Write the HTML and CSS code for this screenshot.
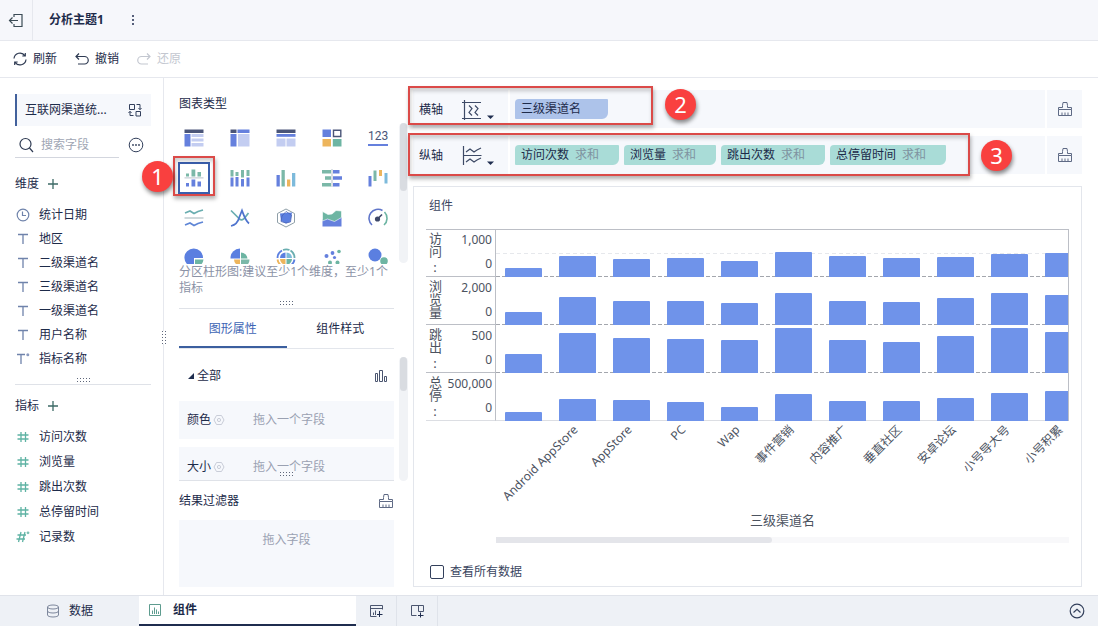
FILE: index.html
```
<!DOCTYPE html>
<html lang="zh-CN">
<head>
<meta charset="utf-8">
<title>分析主题1</title>
<link rel="stylesheet" href="styles.css">
</head>
<body>
<svg class="defs" aria-hidden="true">
  <symbol id="i-text" viewBox="0 0 14 14"><path d="M2 2.5h10M7 2.5V12" fill="none" stroke="#6f83ab" stroke-width="1.3"/></symbol>
  <symbol id="i-text-star" viewBox="0 0 14 14"><path d="M1 2.5h8M5 2.5V12" fill="none" stroke="#6f83ab" stroke-width="1.3"/><circle cx="11.8" cy="2.8" r="1.5" fill="#8a9abf"/></symbol>
  <symbol id="i-num" viewBox="0 0 14 14"><path d="M5 2v10M9.5 2v10M1.5 5h11M1.5 9h11" fill="none" stroke="#5fb3a4" stroke-width="1.3"/></symbol>
  <symbol id="i-num-star" viewBox="0 0 14 14"><path d="M5 2L2.5 12M9 2L6.500 12M1.500 5h8.500M.5 9h8.500" fill="none" stroke="#5fb3a4" stroke-width="1.3"/><circle cx="12" cy="2.800" r="1.400" fill="#7dbfb3"/></symbol>
  <symbol id="i-plus" viewBox="0 0 12 12"><path d="M6 1v10M1 6h10" fill="none" stroke="#3c6a66" stroke-width="1.3"/></symbol>
  <symbol id="i-brush" viewBox="0 0 16 16"><path d="M1.500 8.500V6.500H5.500V4.500L6 1.500H10L10.500 4.500V6.500H14.500V8.500M1.500 8.500H14.500V14.500H1.500zM5 14V11.500M8 14V11.500M11 14V11.500" fill="none" stroke="#5f6a85" stroke-width="1"/></symbol>
  <symbol id="i-gear" viewBox="0 0 12 12"><path d="M3.500 1.500h5L11 6 8.500 10.500h-5L1 6z" fill="none" stroke="#c9cdd8"/><circle cx="6" cy="6" r="1.600" fill="none" stroke="#c9cdd8"/></symbol>
</svg>

<header class="topbar">
  <button class="exit" aria-label="退出"><svg width="16" height="16" viewBox="0 0 16 16"><path d="M6 5V2.500h8v12H6V12M2 8.500h8M4.500 5.500L1.500 8.500l3 3" fill="none" stroke="#3b4b55" stroke-width="1.200"/></svg></button>
  <h1>分析主题1</h1>
  <button class="more" aria-label="更多"><svg width="4" height="12" viewBox="0 0 4 12" fill="#1f2d4f"><circle cx="2" cy="2" r="1"/><circle cx="2" cy="6" r="1"/><circle cx="2" cy="10" r="1"/></svg></button>
</header>

<nav class="toolbar">
  <button><svg width="16" height="16" viewBox="0 0 16 16" fill="none" stroke="#2e3a52" stroke-width="1.200"><path d="M2 7.500A6 6 0 0 1 13 4.800M14 8.500A6 6 0 0 1 3 11.200M13.300 2v3h-3M2.700 14v-3h3"/></svg>刷新</button>
  <button><svg width="16" height="16" viewBox="0 0 16 16" fill="none" stroke="#2e3a52" stroke-width="1.200"><path d="M5 2.500L2 5.500l3 3M2 5.500h8.500a3.700 3.700 0 0 1 0 7.500H4"/></svg>撤销</button>
  <button disabled><svg width="16" height="16" viewBox="0 0 16 16" fill="none" stroke="#c3c7d0" stroke-width="1.200"><path d="M11 2.500l3 3-3 3M14 5.500H5.500a3.700 3.700 0 0 0 0 7.500H12"/></svg>还原</button>
</nav>

<main class="workspace">
  <aside class="fields">
    <div class="dataset"><span>互联网渠道统...</span>
      <button aria-label="切换数据"><svg width="14" height="14" viewBox="0 0 14 14" fill="none" stroke="#33405c"><path d="M1.500 1.500h5v5h-5zM8 8.500h4.500V13H8zM8.500 1.500h3.500v5M10.500 5L12 6.700 13.500 5M5.500 12.500H2v-4M.5 10L2 8.300 3.500 10"/></svg></button>
    </div>
    <div class="search">
      <label><svg width="16" height="16" viewBox="0 0 16 16" fill="none" stroke="#2e3a52" stroke-width="1.200"><circle cx="7.500" cy="7" r="5.500"/><path d="M11.500 11l3.500 4"/></svg><input type="text" placeholder="搜索字段" aria-label="搜索字段"></label>
      <button aria-label="更多选项"><svg width="16" height="16" viewBox="0 0 16 16"><circle cx="8" cy="8" r="6.800" fill="none" stroke="#33405c"/><g fill="#33405c"><circle cx="5" cy="8" r=".9"/><circle cx="8" cy="8" r=".9"/><circle cx="11" cy="8" r=".9"/></g></svg></button>
    </div>
    <section class="group dims">
      <h2>维度<button aria-label="添加维度"><svg width="12" height="12"><use href="#i-plus"/></svg></button></h2>
      <ul>
        <li><svg width="14" height="14" viewBox="0 0 14 14" fill="none" stroke="#6f83ab" stroke-width="1.200"><circle cx="7" cy="7" r="5.800"/><path d="M6.500 3.500v4h3.500"/></svg>统计日期</li>
        <li><svg width="14" height="14"><use href="#i-text"/></svg>地区</li>
        <li><svg width="14" height="14"><use href="#i-text"/></svg>二级渠道名</li>
        <li><svg width="14" height="14"><use href="#i-text"/></svg>三级渠道名</li>
        <li><svg width="14" height="14"><use href="#i-text"/></svg>一级渠道名</li>
        <li><svg width="14" height="14"><use href="#i-text"/></svg>用户名称</li>
        <li><svg width="14" height="14"><use href="#i-text-star"/></svg>指标名称</li>
      </ul>
      <span class="grip"></span>
    </section>
    <section class="group measures">
      <h2>指标<button aria-label="添加指标"><svg width="12" height="12"><use href="#i-plus"/></svg></button></h2>
      <ul>
        <li><svg width="14" height="14"><use href="#i-num"/></svg>访问次数</li>
        <li><svg width="14" height="14"><use href="#i-num"/></svg>浏览量</li>
        <li><svg width="14" height="14"><use href="#i-num"/></svg>跳出次数</li>
        <li><svg width="14" height="14"><use href="#i-num"/></svg>总停留时间</li>
        <li><svg width="14" height="14"><use href="#i-num-star"/></svg>记录数</li>
      </ul>
    </section>
    <span class="grip-v"></span>
  </aside>

  <section class="config">
    <div class="types">
      <h2>图表类型</h2>
      <div class="type-grid">
        <button aria-label="分组表"><svg viewBox="0 0 20 20"><path fill="#4a5578" d="M.5 1.500h19v3.500H.5z"/><path fill="#6580dd" d="M.5 6h6v12.500h-6z"/><path fill="#c3cdf1" d="M7.500 6h12v3h-12zM7.500 10.500h12v3h-12zM7.500 15h12v3.500h-12z"/></svg></button>
        <button aria-label="交叉表"><svg viewBox="0 0 20 20"><path fill="#4a5578" d="M.5 1.500h6V5h-6z"/><path fill="#6580dd" d="M7.500 1.500h12V5h-12zM.5 6h6v12.500h-6z"/><path fill="#c3cdf1" d="M8 6h11.500v12.500H8z"/></svg></button>
        <button aria-label="明细表"><svg viewBox="0 0 20 20"><path fill="#4a5578" d="M.5 1.500h19v3.500H.5z"/><path fill="#6580dd" d="M.5 6h19v2.800H.5z"/><path fill="#c3cdf1" d="M.5 10.500h9v8h-9zM10.500 10.500h9v8h-9z"/></svg></button>
        <button aria-label="颜色表格"><svg viewBox="0 0 20 20"><path fill="#6580dd" d="M.5 1.500h8.500v7.500H.5z"/><path fill="#fff" stroke="#4a5578" stroke-width="1.400" d="M11.500 2.200h7.300v6.300h-7.300z"/><path fill="#edb55c" d="M.5 11h8.500v7.500H.5z"/><path fill="#6db5a3" d="M10.800 11h8.700v7.500h-8.700z"/></svg></button>
        <button class="kpi" aria-label="指标卡">123</button>
        <button class="on" aria-label="分区柱形图"><svg viewBox="0 0 20 20"><path fill="#7bb8a8" d="M2 5.500h3v3H2zM7.500 1.500h3.800v7H7.500zM13.500 4h3.500v4.500h-3.500z"/><path fill="#b9c3cc" d="M.5 9.400h19v1H.5z"/><path fill="#6580dd" d="M2 15h3v3.500H2zM7.500 11.500h3.800v7H7.500zM13.500 13.500h3.500v5h-3.500z"/></svg></button>
        <button aria-label="堆积柱形图"><svg viewBox="0 0 20 20"><path fill="#7bb8a8" d="M.5 2h3v6.500h-3zM5.500 4h3v4h-3zM11 2h3v7.500h-3zM16.500 2h3v6h-3z"/><path fill="#6580dd" d="M.5 9.500h3v9h-3zM5.500 9h3v9.500h-3zM11 11h3v7.500h-3zM16.500 9.500h3v9h-3z"/></svg></button>
        <button aria-label="多系列柱形图"><svg viewBox="0 0 20 20"><path fill="#6580dd" d="M.5 7h3.300v11.500H.5z"/><path fill="#7bb8a8" d="M5.500 2h3.300v16.500H5.500z"/><path fill="#edb55c" d="M11 11.500h3.300v7H11z"/><path fill="#7dbadb" d="M16 5h3.300v13.500H16z"/></svg></button>
        <button aria-label="对比柱状图"><svg viewBox="0 0 20 20"><path fill="#7bb8a8" d="M0 2h9v3.500H0zM3 8.300h6v3.500H3zM0 15h9v3.500H0z"/><path fill="#b9c3cc" d="M9.500 1h1v18h-1z"/><path fill="#6580dd" d="M11 2h6.500v3.500H11zM11 8.300h9v3.500h-9zM11 15h6.500v3.500H11z"/></svg></button>
        <button aria-label="瀑布图"><svg viewBox="0 0 20 20"><path fill="#6580dd" d="M.5 8h3v10.500h-3z"/><path fill="#7bb8a8" d="M5.500 2.500h3v10.500h-3z"/><path fill="#edb55c" d="M11 2h3v6h-3z"/><path fill="#7dbadb" d="M16.500 5h3v10.500h-3z"/></svg></button>
        <button aria-label="分区折线图"><svg viewBox="0 0 20 20" fill="none" stroke-width="1.700"><path stroke="#6aaeb0" d="M1 5l5-2 4 2.500 4-2 5-1.500"/><path stroke="#9fb3b8" stroke-width="1" d="M.5 10h19"/><path stroke="#5f86d6" d="M1 17l5-2 4 2.500 4-2 5-1.500"/></svg></button>
        <button aria-label="多系列折线图"><svg viewBox="0 0 20 20" fill="none" stroke-width="1.700"><path stroke="#6aaeb0" d="M1 2.500L8.500 10c2 3 5 2 6.500-.5L18.500 5"/><path stroke="#4f74ce" d="M1 18c4-1 7-4 8-8l3-7.500c2 5.500 3.500 10 7 13"/></svg></button>
        <button aria-label="雷达图"><svg viewBox="0 0 20 20"><path fill="none" stroke="#8f9fa8" d="M10 1l8.500 4.500v9L10 19l-8.500-4.500v-9z"/><path fill="#5b7fe0" d="M10 5l6-.5-1.500 9-4.500 2-5-2.500L4 5.500z"/><path fill="none" stroke="#4a63b5" stroke-width=".8" d="M10 3.500L6 8l-1 5.500 5 1.500 4.500-1 1-7z"/></svg></button>
        <button aria-label="面积图"><svg viewBox="0 0 20 20"><path fill="#6580dd" d="M.5 11l19-2v9.500H.5z"/><path fill="#6db5a3" stroke="#fff" stroke-width=".6" d="M.5 3.500L6 6.500 10 6l4-3.500 5.500.5v6.500l-7 4L5.500 11l-5 2z"/></svg></button>
        <button aria-label="仪表盘"><svg viewBox="0 0 20 20" fill="none"><path stroke="#5f75c9" stroke-width="1.600" d="M4 17A9 9 0 0 1 14.500 2.500"/><path stroke="#6db5a3" stroke-width="1.600" d="M16.500 4A9 9 0 0 1 16 17"/><circle cx="9.500" cy="11" r="2.600" fill="#3d4768"/><path stroke="#3d4768" stroke-width="1.600" d="M10 10.500l4-4"/></svg></button>
        <button aria-label="饼图"><svg viewBox="0 0 20 20"><path fill="#5b7fe0" d="M10 10h9A9.300 9.300 0 1 0 10 19z"/><path fill="#6db5a3" d="M11 11.500h8.500a9 9 0 0 1-8.500 8z"/></svg></button>
        <button aria-label="玫瑰图"><svg viewBox="0 0 20 20"><path fill="#5b7fe0" d="M10 10.500V.5A9.500 9.500 0 0 0 .5 10.500z"/><path fill="#6db5a3" d="M11 4.500v6h6.500a6.500 6.500 0 0 0-6.500-6z"/><path fill="#edb55c" d="M4 11.500h6v6a6 6 0 0 1-6-6z"/><path fill="#7bb8a8" d="M11 11.500h8.500a8 8 0 0 1-8.500 8z"/></svg></button>
        <button aria-label="多层饼图"><svg viewBox="0 0 20 20"><g fill="none" stroke-width="1.800"><path stroke="#5b7fe0" d="M1.500 10A8.500 8.500 0 0 1 6 2.500"/><path stroke="#6aaeb0" d="M7 2A8.500 8.500 0 0 1 13.500 2M14.500 2.500A8.500 8.500 0 0 1 18.500 10"/><path stroke="#edb55c" d="M1.500 11.500a8.500 8.500 0 0 0 5 6.500"/><path stroke="#5b7fe0" d="M18.500 11.500a8.500 8.500 0 0 1-5 6.500"/></g><path fill="#5b7fe0" d="M9.500 10V4.500A5.500 5.500 0 0 0 4 10z"/><path fill="#7dbadb" d="M10.500 10V4.500A5.500 5.500 0 0 1 16 10z"/><path fill="#edb55c" d="M4 11h5.500v5.500A5.500 5.500 0 0 1 4 11z"/><path fill="#6db5a3" d="M10.500 11H16a5.500 5.500 0 0 1-5.500 5.500z"/></svg></button>
        <button aria-label="散点图"><svg viewBox="0 0 20 20"><g fill="#6580dd"><circle cx="10.500" cy="5" r="1.900"/><circle cx="4.500" cy="8" r="2"/><circle cx="12.500" cy="9.500" r="1.600"/></g><g fill="#6db5a3"><circle cx="17" cy="3.500" r="1.800"/><circle cx="8" cy="14.500" r="2"/><circle cx="15.500" cy="14.500" r="2"/></g></svg></button>
        <button aria-label="聚合气泡图"><svg viewBox="0 0 20 20"><circle cx="7" cy="7" r="6.500" fill="#5b7fe0"/><circle cx="16" cy="13" r="3.800" fill="#6db5a3"/></svg></button>
      </div>
      <p>分区柱形图:建议至少1个维度，至少1个指标</p>
      <span class="grip"></span>
      <span class="track long"><i></i></span>
      <span class="mark mark-1"></span><b class="badge badge-1">1</b>
    </div>
    <div class="tabs"><button class="on">图形属性</button><button>组件样式</button></div>
    <div class="attrs">
      <h3><svg width="6" height="6" viewBox="0 0 6 6"><path d="M6 0v6H0z" fill="#1f2d4f"/></svg>全部<svg class="end" width="14" height="14" viewBox="0 0 14 14" fill="none" stroke="#4a556f"><path d="M1.500 4.500h2v8h-2zM5.500 1.500h3v11h-3zM10.500 7.500h2v5h-2z"/></svg></h3>
      <div class="attr"><span>颜色</span><svg width="12" height="12"><use href="#i-gear"/></svg><em>拖入一个字段</em></div>
      <div class="attr"><span>大小</span><svg width="12" height="12"><use href="#i-gear"/></svg><em>拖入一个字段</em></div>
      <span class="grip"></span>
      <span class="track"><i></i></span>
    </div>
    <div class="filter">
      <h2>结果过滤器<button aria-label="清空过滤器"><svg width="16" height="16"><use href="#i-brush"/></svg></button></h2>
      <div class="drop">拖入字段</div>
    </div>
  </section>

  <section class="canvas">
    <div class="axis">
      <div class="axis-name"><span>横轴</span><button aria-label="横轴设置"><svg width="34" height="24" viewBox="0 0 34 24" fill="none" stroke="#3d4a66" stroke-width="1.200"><path d="M4.500 2v20M2 4.500h19M2 20.500h19M9 7.500l3 3-3 4 3 3M15 7.500l3 3-3 4 3 3"/><path fill="#1f2d4f" stroke="none" d="M27 17.500h7L30.500 21z"/></svg></button></div>
      <div class="pills"><span class="pill dim">三级渠道名</span></div>
      <button class="clear" aria-label="清空横轴"><svg width="16" height="16"><use href="#i-brush"/></svg></button>
      <span class="mark mark-2"></span><b class="badge badge-2">2</b>
    </div>
    <div class="axis">
      <div class="axis-name"><span>纵轴</span><button aria-label="纵轴设置"><svg width="34" height="24" viewBox="0 0 34 24" fill="none" stroke="#3d4a66" stroke-width="1.200"><path d="M3.500 2v19M3.500 11.500h18M6 8l4-3 4 3 3-2 4-2M6 18l4-3 4 3 3-2 4-2"/><path fill="#1f2d4f" stroke="none" d="M27 17.500h7L30.500 21z"/></svg></button></div>
      <div class="pills">
        <span class="pill">访问次数<small>求和</small></span>
        <span class="pill">浏览量<small>求和</small></span>
        <span class="pill">跳出次数<small>求和</small></span>
        <span class="pill">总停留时间<small>求和</small></span>
      </div>
      <button class="clear" aria-label="清空纵轴"><svg width="16" height="16"><use href="#i-brush"/></svg></button>
      <span class="mark mark-3"></span><b class="badge badge-3">3</b>
    </div>

    <article class="card">
      <h2>组件</h2>
      <div class="chart">
        <div class="row first"><div class="name">访问:</div><div class="scale"><span>1,000</span><span>0</span></div>
          <div class="plot"><i style="height:9px"></i><i style="height:21px"></i><i style="height:18px"></i><i style="height:19px"></i><i style="height:16px"></i><i style="height:25px"></i><i style="height:21px"></i><i style="height:19px"></i><i style="height:20px"></i><i style="height:23px"></i><i style="height:24px"></i></div></div>
        <div class="row"><div class="name">浏览量</div><div class="scale"><span>2,000</span><span>0</span></div>
          <div class="plot"><i style="height:13px"></i><i style="height:28px"></i><i style="height:24px"></i><i style="height:24px"></i><i style="height:22px"></i><i style="height:32px"></i><i style="height:24px"></i><i style="height:23px"></i><i style="height:27px"></i><i style="height:32px"></i><i style="height:30px"></i></div></div>
        <div class="row"><div class="name">跳出:</div><div class="scale"><span>500</span><span>0</span></div>
          <div class="plot"><i style="height:19px"></i><i style="height:40px"></i><i style="height:35px"></i><i style="height:34px"></i><i style="height:33px"></i><i style="height:45px"></i><i style="height:33px"></i><i style="height:31px"></i><i style="height:37px"></i><i style="height:45px"></i><i style="height:41px"></i></div></div>
        <div class="row last"><div class="name">总停:</div><div class="scale"><span>500,000</span><span>0</span></div>
          <div class="plot"><i style="height:9px"></i><i style="height:22px"></i><i style="height:21px"></i><i style="height:19px"></i><i style="height:14px"></i><i style="height:27px"></i><i style="height:20px"></i><i style="height:20px"></i><i style="height:23px"></i><i style="height:28px"></i><i style="height:30px"></i></div></div>
        <div class="cats"><div></div><div><span>Android AppStore</span></div><div><span>AppStore</span></div><div><span>PC</span></div><div><span>Wap</span></div><div><span>事件营销</span></div><div><span>内容推广</span></div><div><span>垂直社区</span></div><div><span>安卓论坛</span></div><div><span>小号导大号</span></div><div><span>小号积累</span></div></div>
        <div class="axis-title">三级渠道名</div>
        <div class="hscroll"><i></i></div>
      </div>
      <label class="all"><input type="checkbox">查看所有数据</label>
    </article>
  </section>
</main>

<footer class="bottom">
  <button class="tab data"><svg width="14" height="14" viewBox="0 0 14 14" fill="none" stroke="#7d879c"><ellipse cx="7" cy="3" rx="5.500" ry="2"/><path d="M1.500 3v8c0 1.200 2.500 2 5.500 2s5.500-.8 5.500-2V3M1.500 7c0 1.200 2.500 2 5.500 2s5.500-.8 5.500-2"/></svg>数据</button>
  <button class="tab on"><svg width="14" height="14" viewBox="0 0 14 14" fill="none" stroke="#5e9c8f"><path d="M1.500 1.500h11v11h-11zM4.500 11V7.500M6.500 11V4.500M8.500 11V6.500M10.500 11V8.500"/></svg>组件</button>
  <button class="add" aria-label="添加组件"><svg width="14" height="14" viewBox="0 0 14 14" fill="none" stroke="#4a556f"><path d="M13.500 5.500v-4h-12v11h6M1.500 4.500h12M4.500 11V8.500M6.500 11V6.500"/><path stroke="#1f2d4f" d="M10.500 7v6M8 10.500h5.500"/></svg></button>
  <button class="add" aria-label="添加仪表板"><svg width="14" height="14" viewBox="0 0 14 14" fill="none" stroke="#4a556f"><path d="M13.500 7.500v-6h-12v10h5M8.500 1.500v6h5"/><path stroke="#1f2d4f" d="M10.500 8.500v5M8 11.500h5.500"/></svg></button>
  <button class="up" aria-label="展开"><svg width="16" height="16" viewBox="0 0 16 16" fill="none" stroke="#33405c" stroke-width="1.200"><circle cx="8" cy="8" r="6.800"/><path d="M4.500 9.500L8 6.300l3.500 3.200"/></svg></button>
</footer>
</body>
</html>
```
FILE: styles.css
```
* { box-sizing: border-box; margin: 0; padding: 0; }
body {
  height: 100vh;
  display: flex;
  flex-direction: column;
  overflow: hidden;
  background: #fff;
  color: #1d2b4a;
  font: 12px/16px "Noto Sans", "Noto Sans CJK SC", sans-serif;
}
button { border: 0; background: none; font: inherit; color: inherit; display: flex; align-items: center; justify-content: center; }
h1, h2, h3 { font-size: 12px; font-weight: 400; }
ul { list-style: none; }
svg { flex: none; display: block; }
.defs { position: absolute; width: 0; height: 0; }

.topbar { flex: none; height: 41px; display: flex; align-items: center; background: #f6f7fb; border-bottom: 1px solid #e6e8ee; }
.exit { width: 33px; height: 40px; border-right: 1px solid #e6e8ee; }
.topbar h1 { margin: 0 27px 0 16px; font-weight: 700; }
.toolbar { flex: none; height: 37px; padding: 0 12px; display: flex; align-items: center; gap: 17px; border-bottom: 1px solid #e6e8ee; }
.toolbar button { gap: 5px; }
.toolbar button:disabled { color: #c3c7d0; }

.workspace { flex: 1; min-height: 0; display: grid; grid-template-columns: 164px 244px minmax(0, 1fr); }

.grip { display: block; width: 13px; height: 4px; background: linear-gradient(90deg, #5f677b 1px, transparent 1px) 0 0 / 3px 1px repeat-x, linear-gradient(90deg, #5f677b 1px, transparent 1px) 0 3px / 3px 1px repeat-x; }
.fields { position: relative; padding: 16px 12px 0 15px; border-right: 1px solid #e6e8ee; }
.grip-v { position: absolute; right: -3px; top: 253px; width: 4px; height: 13px; background: linear-gradient(#5f677b 1px, transparent 1px) 0 0 / 1px 3px repeat-y, linear-gradient(#5f677b 1px, transparent 1px) 3px 0 / 1px 3px repeat-y, #fff; }
.dataset { height: 32px; padding: 0 9px 0 8px; display: flex; align-items: center; justify-content: space-between; background: #f6f8fc; border-left: 2px solid #42619c; }
.search { height: 32px; display: flex; justify-content: space-between; }
.search label { width: 104px; height: 32px; padding: 6px 0 0 3px; display: flex; align-items: center; gap: 7px; border-bottom: 1px solid #d3d6de; }
.search input { width: 72px; border: 0; outline: 0; background: none; font: inherit; color: inherit; }
.search input::placeholder { color: #a0a6b4; }
.search button { margin-right: 7px; padding-top: 6px; }
.group h2 { display: flex; align-items: center; gap: 8px; height: 20px; }
.group li { display: flex; align-items: center; gap: 9px; height: 24px; padding-left: 1px; }
.dims { margin-top: 16px; border-bottom: 1px solid #dfe2e8; }
.dims ul { margin-top: 9px; }
.dims .grip { margin: 7px auto 2px; }
.measures { margin-top: 11px; }
.measures ul { margin-top: 8px; }
.measures li { height: 25px; }

.config { padding: 0 14px 8px 15px; display: flex; flex-direction: column; }
.types { position: relative; height: 231px; padding-top: 18px; border-bottom: 1px solid #dfe2e8; }
.type-grid { margin: 6px 0 0 -8px; width: 230px; height: 146px; overflow: hidden; display: grid; grid-template-columns: repeat(5, 46px); grid-auto-rows: 40px; }
.type-grid button { width: 32px; height: 32px; margin: 4px 7px; }
.type-grid svg { width: 20px; height: 20px; }
.type-grid .on { border: 2px solid #3a5fae; }
.type-grid .kpi { width: 20px; height: 18px; margin: 10px 13px; font-family: Roboto, sans-serif; border-bottom: 2px solid #6580dd; color: #4a5578; }
.types p { color: #8b92a6; height: 32px; overflow: hidden; }
.types .grip { margin: 5px auto 0; }
.track { position: absolute; top: 8px; right: -14px; width: 9px; height: 124px; border-radius: 5px; background: #f1f3f6; }
.track i { display: block; width: 7px; height: 34px; margin: 0 auto; border-radius: 4px; background: #d9dce1; }
.track.long { top: 45px; height: 140px; }
.track.long i { height: 68px; }

.tabs { flex: none; height: 40px; display: grid; grid-template-columns: 1fr 1fr; border-bottom: 1px solid #e3e6ec; }
.tabs button { padding-top: 2px; border-bottom: 2px solid transparent; }
.tabs .on { color: #3d65b5; border-bottom-color: #3b5f9f; }
.attrs { position: relative; height: 132px; border-bottom: 1px solid #dfe2e8; }
.attrs h3 { height: 52px; padding: 2px 6px 0 9px; display: flex; align-items: center; gap: 3px; }
.attrs .end { margin-left: auto; }
.attr { height: 38px; margin-bottom: 8px; padding: 0 8px; display: flex; align-items: center; gap: 2px; background: #f6f8fc; }
.attr + .attr { height: 33px; margin: 0; padding-top: 6px; }
.attr em { margin-left: 26px; font-style: normal; color: #9aa1b2; }
.attrs .grip { position: absolute; left: 101px; bottom: 4px; }
.filter { flex: 1; display: flex; flex-direction: column; }
.filter h2 { height: 39px; display: flex; align-items: center; justify-content: space-between; }
.drop { flex: 1; padding-top: 12px; text-align: center; color: #9aa1b2; background: #f6f8fc; }

.canvas { padding: 12px 16px 8px 5px; display: flex; flex-direction: column; min-width: 0; }
.axis { position: relative; flex: none; height: 38px; margin-bottom: 8px; display: grid; grid-template-columns: 95px 1fr 35px; column-gap: 2px; }
.axis > div, .clear { background: #f6f8fc; }
.axis-name { padding: 2px 14px 0 6px; display: flex; align-items: center; justify-content: space-between; }
.pills { padding: 9px 5px; display: flex; gap: 5px; }
.pill { height: 20px; padding: 2px 20px 2px 6px; border-radius: 4px 1px 6px 1px; background: #a9dcd7; white-space: nowrap; }
.pill.dim { padding-right: 27px; background: #adc3ea; }
.pill small { margin-left: 6px; font-size: 12px; color: #7f93a0; }
.mark { position: absolute; border: 2px solid #db4a48; box-shadow: 1px 3px 4px rgba(0, 0, 0, .3), inset 1px 3px 4px rgba(0, 0, 0, .2); pointer-events: none; }
.badge { position: absolute; width: 31px; height: 31px; border-radius: 50%; background: #f9403f; color: #fff; font: 400 22px/31px "Noto Sans", sans-serif; text-align: center; box-shadow: 1px 3px 4px rgba(0, 0, 0, .45); }
.mark-1 { left: -6px; top: 78px; width: 42px; height: 40px; }
.badge-1 { left: -37px; top: 83px; }
.mark-2 { left: -5px; top: -4px; width: 245px; height: 39px; }
.badge-2 { left: 252px; top: -1px; }
.mark-3 { left: -5px; top: -3px; width: 562px; height: 43px; }
.badge-3 { left: 568px; top: 4px; }

.card { flex: 1; margin-top: 4px; padding: 0 12px 4px; border: 1px solid #e3e6ec; display: flex; flex-direction: column; }
.card h2 { height: 38px; padding-left: 3px; display: flex; align-items: center; color: #3a4560; }
.chart { margin-top: 4px; color: #4c535f; }
.row { display: grid; grid-template-columns: 17px 53px minmax(0, 1fr); grid-template-rows: minmax(0, 1fr); height: 48px; }
.first { border-top: 1px solid #bcbfc6; }
.name { writing-mode: vertical-rl; text-orientation: upright; font-size: 13px; line-height: 17px; padding-top: 3px; white-space: nowrap; border-bottom: 1px solid #bcbfc6; }
.scale { display: flex; flex-direction: column; gap: 8px; padding: 3px 3px 0 0; text-align: right; border-right: 1px solid #bcbfc6; border-bottom: 1px solid #bcbfc6; }
.first .name, .first .scale { padding-top: 2px; }
.plot { display: flex; align-items: flex-end; gap: 17px; padding-left: 9px; overflow: hidden; border-right: 1px solid #bcbfc6; background: repeating-linear-gradient(90deg, #a3a6ad 0 4px, transparent 4px 6px) 0 100% / 100% 1px no-repeat; }
.first .plot { background: repeating-linear-gradient(90deg, #a3a6ad 0 4px, transparent 4px 6px) 0 100% / 100% 1px no-repeat, repeating-linear-gradient(90deg, #e6e8ec 0 4px, transparent 4px 7px) 0 23px / 100% 1px no-repeat; }
.last > div { border-bottom-color: #dcdee3; }
.last .plot { background: linear-gradient(#dcdee3, #dcdee3) 0 100% / 100% 1px no-repeat; }
.plot i { flex: 0 0 37px; border-radius: 1px 1px 0 0; background: #6f93ea; }
.cats { margin-left: 70px; height: 90px; display: flex; }
.cats div { flex: 0 0 54px; min-width: 0; padding: 1px 34px 0 0; display: flex; justify-content: flex-end; }
.cats div:last-child { flex: 0 1 54px; padding-right: 14px; }
.cats span { flex: none; height: 16px; white-space: nowrap; transform: rotate(-45deg); transform-origin: 100% 0; }
.axis-title { margin-left: 70px; height: 18px; font-size: 13px; line-height: 18px; text-align: center; }
.hscroll { margin: 8px 0 0 70px; height: 6px; background: #f8f8fa; }
.hscroll i { display: block; width: 276px; height: 6px; border-radius: 0 3px 3px 0; background: #e4e5ea; }
.all { margin-top: auto; height: 20px; padding-left: 4px; display: flex; align-items: center; gap: 6px; color: #3a4560; }
.all input { appearance: none; width: 14px; height: 14px; border: 1px solid #33405c; border-radius: 2px; }

.bottom { flex: none; height: 31px; display: flex; background: #eef1f6; border-top: 1px solid #e0e3ea; }
.tab { gap: 9px; }
.data { width: 139px; }
.tab.on { width: 217px; padding-left: 9px; justify-content: flex-start; gap: 11px; background: #fff; border-bottom: 2px solid #1f2d4f; font-weight: 700; }
.add { width: 41px; border-right: 1px solid #dfe3ea; }
.up { margin-left: auto; width: 42px; }
```
